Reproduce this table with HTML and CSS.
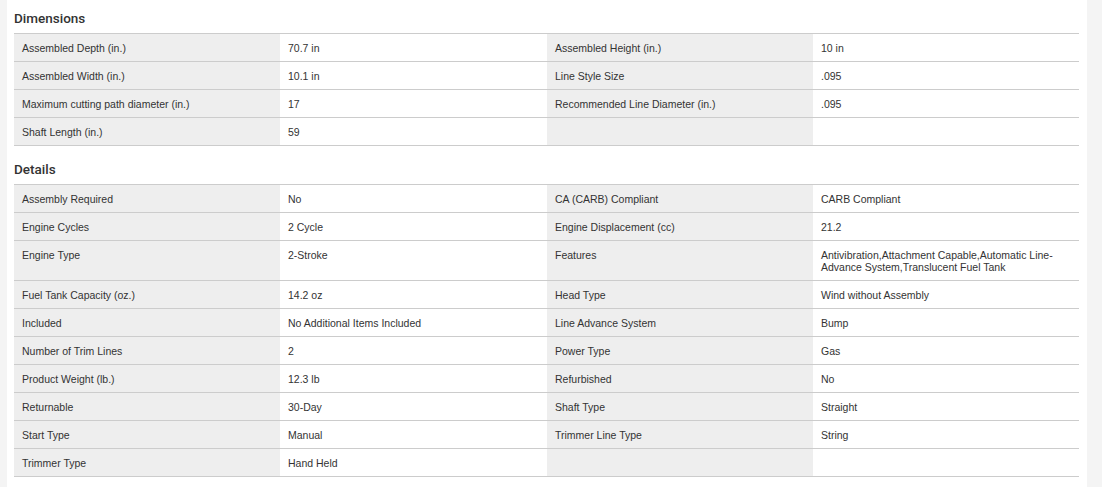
FILE: index.html
```html
<!DOCTYPE html>
<html>
<head>
<meta charset="utf-8">
<link rel="stylesheet" href="styles.css">
</head>
<body>
<div class="page">
  <div class="gutter-left"></div>
  <main class="content">
    <section class="spec-section">
      <h2 class="spec-title">Dimensions</h2>
      <div class="spec-table">
        <div class="spec-row">
          <div class="cell label">Assembled Depth (in.)</div><div class="cell value">70.7 in</div>
          <div class="cell label">Assembled Height (in.)</div><div class="cell value">10 in</div>
        </div>
        <div class="spec-row">
          <div class="cell label">Assembled Width (in.)</div><div class="cell value">10.1 in</div>
          <div class="cell label">Line Style Size</div><div class="cell value">.095</div>
        </div>
        <div class="spec-row">
          <div class="cell label">Maximum cutting path diameter (in.)</div><div class="cell value">17</div>
          <div class="cell label">Recommended Line Diameter (in.)</div><div class="cell value">.095</div>
        </div>
        <div class="spec-row">
          <div class="cell label">Shaft Length (in.)</div><div class="cell value">59</div>
          <div class="cell label"></div><div class="cell value"></div>
        </div>
      </div>
    </section>
    <section class="spec-section">
      <h2 class="spec-title">Details</h2>
      <div class="spec-table">
        <div class="spec-row">
          <div class="cell label">Assembly Required</div><div class="cell value">No</div>
          <div class="cell label">CA (CARB) Compliant</div><div class="cell value">CARB Compliant</div>
        </div>
        <div class="spec-row">
          <div class="cell label">Engine Cycles</div><div class="cell value">2 Cycle</div>
          <div class="cell label">Engine Displacement (cc)</div><div class="cell value">21.2</div>
        </div>
        <div class="spec-row">
          <div class="cell label">Engine Type</div><div class="cell value">2-Stroke</div>
          <div class="cell label">Features</div><div class="cell value">Antivibration,Attachment Capable,Automatic Line-Advance System,Translucent Fuel Tank</div>
        </div>
        <div class="spec-row">
          <div class="cell label">Fuel Tank Capacity (oz.)</div><div class="cell value">14.2 oz</div>
          <div class="cell label">Head Type</div><div class="cell value">Wind without Assembly</div>
        </div>
        <div class="spec-row">
          <div class="cell label">Included</div><div class="cell value">No Additional Items Included</div>
          <div class="cell label">Line Advance System</div><div class="cell value">Bump</div>
        </div>
        <div class="spec-row">
          <div class="cell label">Number of Trim Lines</div><div class="cell value">2</div>
          <div class="cell label">Power Type</div><div class="cell value">Gas</div>
        </div>
        <div class="spec-row">
          <div class="cell label">Product Weight (lb.)</div><div class="cell value">12.3 lb</div>
          <div class="cell label">Refurbished</div><div class="cell value">No</div>
        </div>
        <div class="spec-row">
          <div class="cell label">Returnable</div><div class="cell value">30-Day</div>
          <div class="cell label">Shaft Type</div><div class="cell value">Straight</div>
        </div>
        <div class="spec-row">
          <div class="cell label">Start Type</div><div class="cell value">Manual</div>
          <div class="cell label">Trimmer Line Type</div><div class="cell value">String</div>
        </div>
        <div class="spec-row">
          <div class="cell label">Trimmer Type</div><div class="cell value">Hand Held</div>
          <div class="cell label"></div><div class="cell value"></div>
        </div>
      </div>
    </section>
  </main>
  <div class="gutter-right"></div>
</div>
</body>
</html>
```
FILE: styles.css
```css
html, body {
  margin: 0;
  padding: 0;
  background: #f4f4f4;
}
body {
  font-family: "Liberation Sans", Arial, sans-serif;
  color: #333;
}
.page {
  display: flex;
  min-height: 487px;
}
.gutter-left {
  width: 7px;
  background: #f4f4f4;
  flex: none;
}
.gutter-right {
  width: 15px;
  background: #f4f4f4;
  flex: none;
}
.content {
  width: 1080px;
  flex: none;
  background: #fff;
  padding: 0 8px 0 7px;
  box-sizing: border-box;
}
.spec-section {
  padding-top: 8px;
}
.spec-section + .spec-section {
  padding-top: 13px;
}
.spec-title {
  margin: 0;
  font-family: Roboto, "Liberation Sans", sans-serif;
  font-weight: 500;
  font-size: 13.5px;
  line-height: 20px;
  padding-bottom: 5px;
  color: #333;
}
.spec-table {
  border-top: 1px solid #ccc;
}
.spec-row {
  display: grid;
  grid-template-columns: 266px 267px 266px 266px;
  border-bottom: 1px solid #ccc;
}
.cell {
  font-size: 10.5px;
  line-height: 12px;
  padding: 8px 8px 7px 8px;
  min-height: 12px;
}
.label {
  background: #eee;
}
.value {
  background: #fff;
}
```
